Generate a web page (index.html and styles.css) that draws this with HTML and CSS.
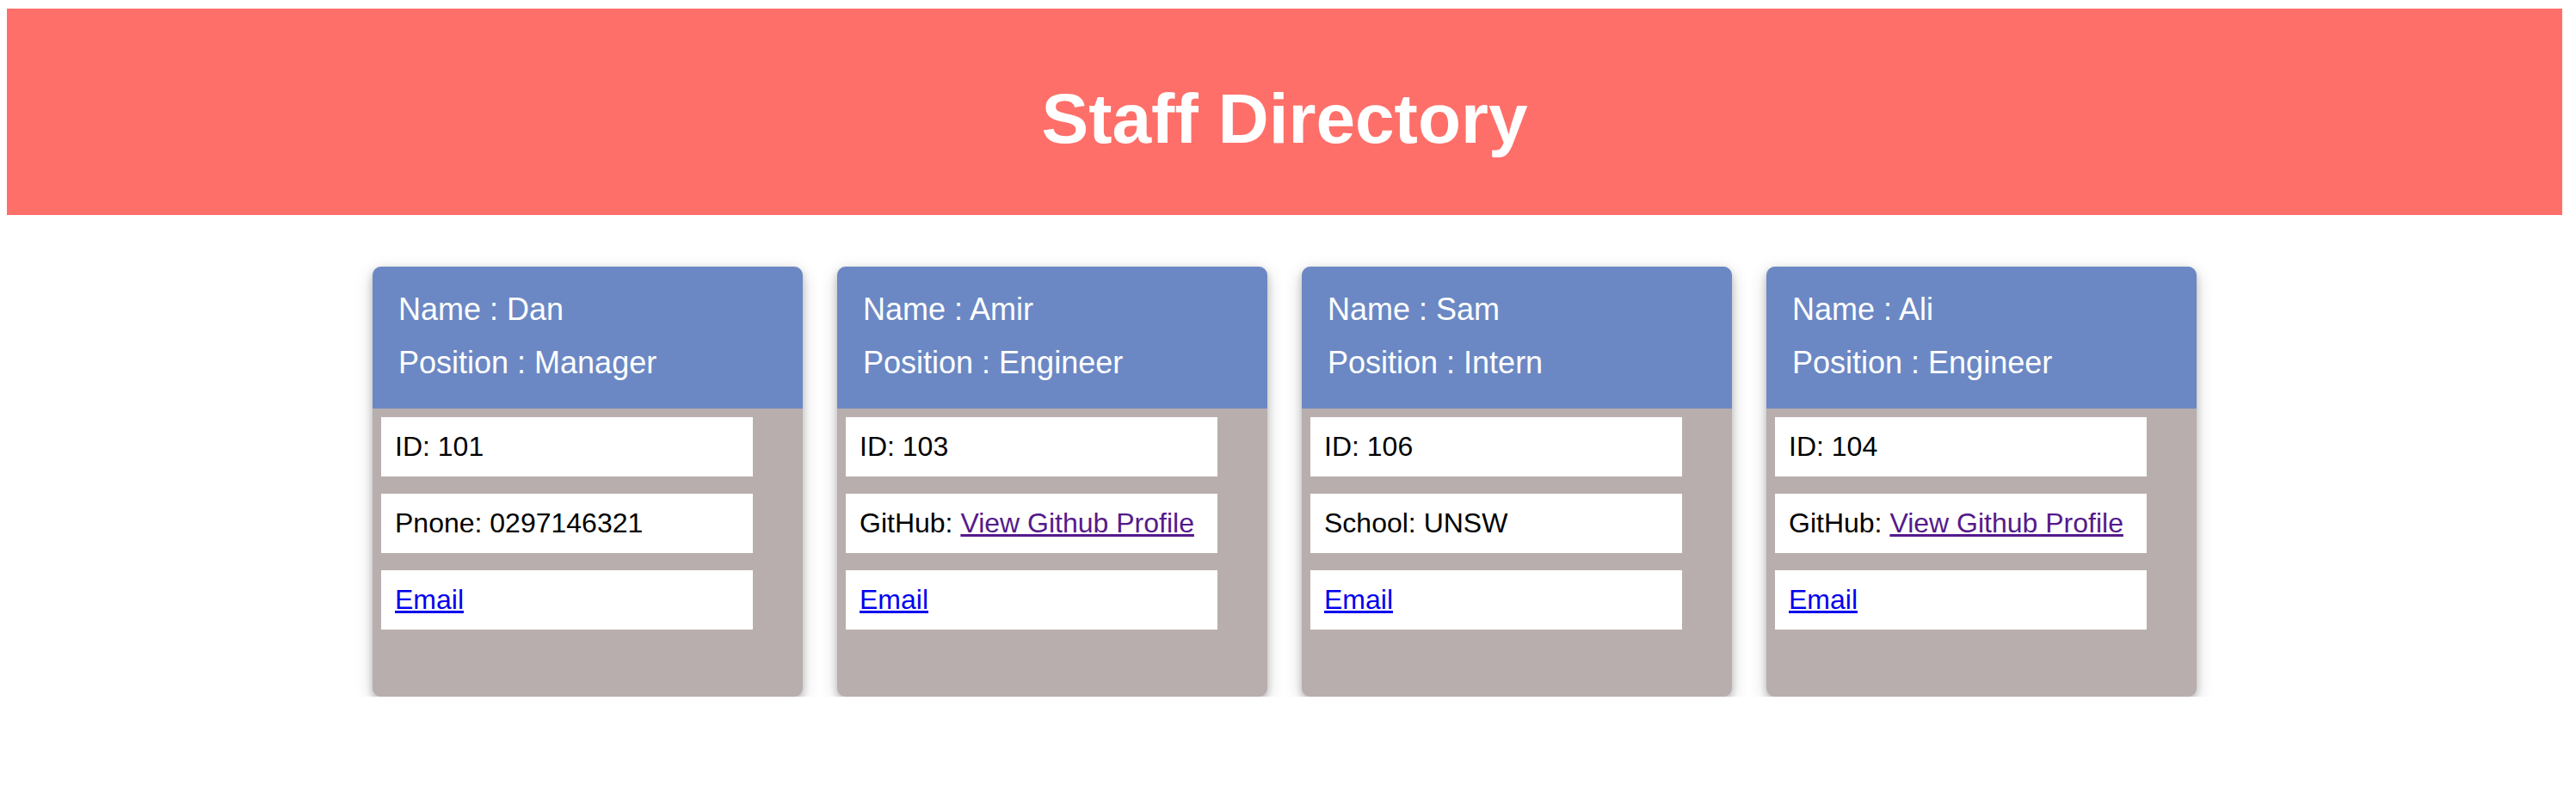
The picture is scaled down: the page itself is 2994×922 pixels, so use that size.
FILE: index.html
```html
<!DOCTYPE html>
<html lang="en">
<head>
<meta charset="utf-8">
<title>Staff Directory</title>
<link rel="stylesheet" href="styles.css">
</head>
<body>
<header class="banner">
  <h1 class="banner-title">Staff Directory</h1>
</header>
<main class="team">
  <section class="card">
    <div class="card-head">
      <p class="card-line">Name : Dan</p>
      <p class="card-line">Position : Manager</p>
    </div>
    <ul class="card-body">
      <li class="field">ID: 101</li>
      <li class="field">Pnone: 0297146321</li>
      <li class="field"><a class="link" href="#">Email</a></li>
    </ul>
  </section>
  <section class="card">
    <div class="card-head">
      <p class="card-line">Name : Amir</p>
      <p class="card-line">Position : Engineer</p>
    </div>
    <ul class="card-body">
      <li class="field">ID: 103</li>
      <li class="field">GitHub: <a class="link visited" href="#">View Github Profile</a></li>
      <li class="field"><a class="link" href="#">Email</a></li>
    </ul>
  </section>
  <section class="card">
    <div class="card-head">
      <p class="card-line">Name : Sam</p>
      <p class="card-line">Position : Intern</p>
    </div>
    <ul class="card-body">
      <li class="field">ID: 106</li>
      <li class="field">School: UNSW</li>
      <li class="field"><a class="link" href="#">Email</a></li>
    </ul>
  </section>
  <section class="card">
    <div class="card-head">
      <p class="card-line">Name : Ali</p>
      <p class="card-line">Position : Engineer</p>
    </div>
    <ul class="card-body">
      <li class="field">ID: 104</li>
      <li class="field">GitHub: <a class="link visited" href="#">View Github Profile</a></li>
      <li class="field"><a class="link" href="#">Email</a></li>
    </ul>
  </section>
</main>
</body>
</html>
```
FILE: styles.css
```css
html, body {
  background: #ffffff;
}
body {
  margin: 10px 16px 8px 8px;
  font-family: "Liberation Sans", Arial, sans-serif;
  color: #000000;
}
.banner {
  box-sizing: border-box;
  height: 240px;
  padding-top: 81px;
  background: #ff6f69;
  text-align: center;
}
.banner-title {
  margin: 0;
  font-size: 82px;
  line-height: 94px;
  font-weight: bold;
  color: #ffffff;
}
.team {
  display: flex;
  justify-content: center;
  gap: 40px;
  margin-top: 60px;
}
.card {
  box-sizing: border-box;
  width: 500px;
  height: 500px;
  display: flex;
  flex-direction: column;
  border-radius: 10px;
  overflow: hidden;
  background: #b8aead;
  box-shadow: 0 4px 8px 0 rgba(0, 0, 0, 0.2), 0 6px 20px 0 rgba(0, 0, 0, 0.19);
}
.card-head {
  display: flex;
  flex-direction: column;
  gap: 20px;
  padding: 29px 30px 32px;
  background: #6b88c4;
  color: #ffffff;
}
.card-line {
  margin: 0;
  font-size: 36px;
  line-height: 42px;
}
.card-body {
  list-style: none;
  margin: 0;
  padding: 10px;
  display: flex;
  flex-direction: column;
  gap: 20px;
}
.field {
  box-sizing: border-box;
  width: 432px;
  height: 69px;
  padding: 16px;
  background: #ffffff;
  font-size: 32px;
  line-height: 37px;
  white-space: nowrap;
}
.link {
  color: #0000ee;
  text-decoration: underline;
}
.link.visited {
  color: #551a8b;
}
```
